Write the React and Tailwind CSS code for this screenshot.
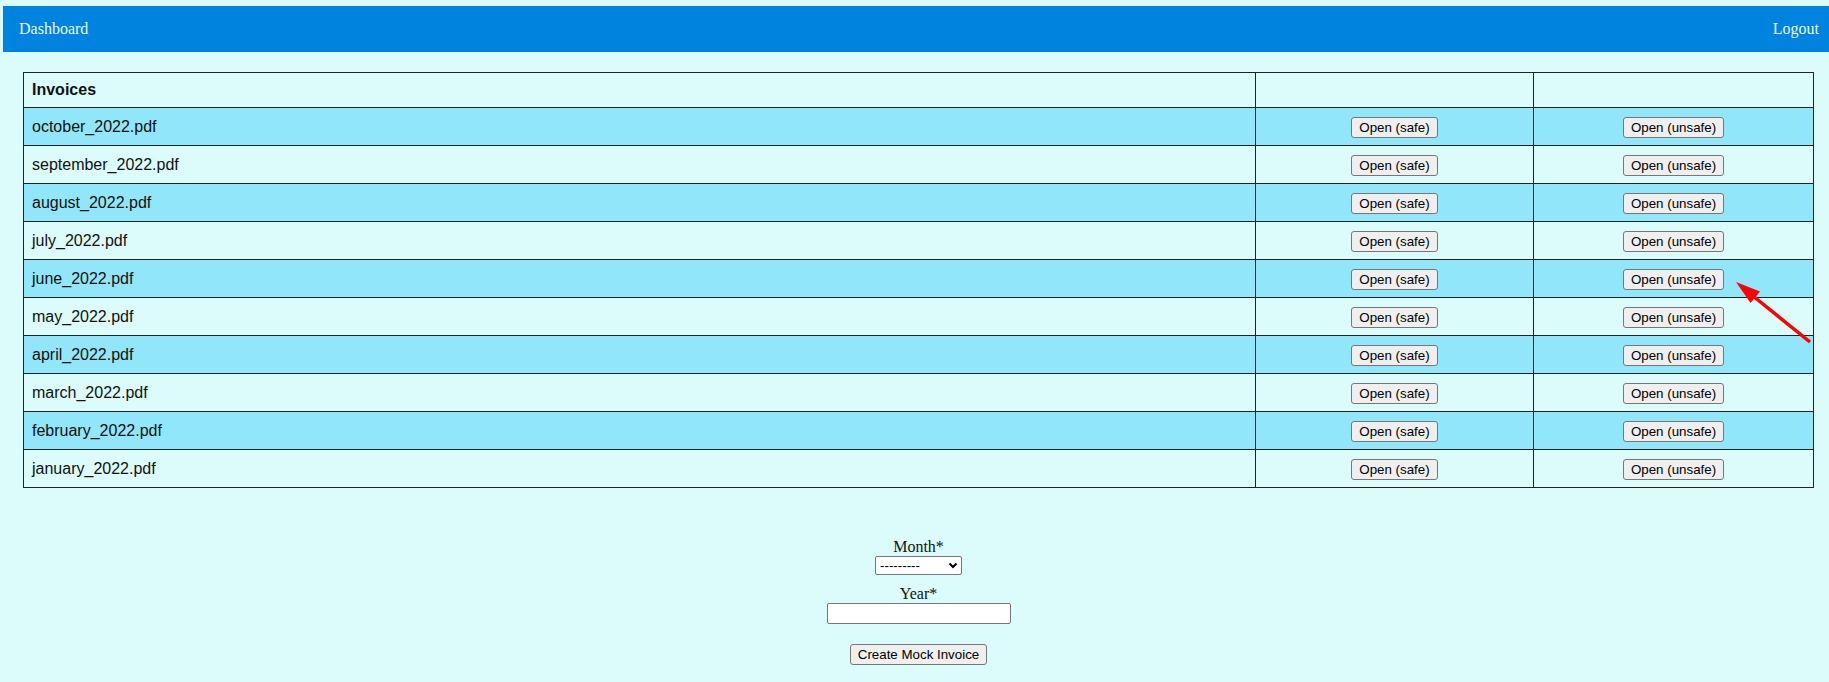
import React from 'react';

const invoices = [
  'october_2022.pdf',
  'september_2022.pdf',
  'august_2022.pdf',
  'july_2022.pdf',
  'june_2022.pdf',
  'may_2022.pdf',
  'april_2022.pdf',
  'march_2022.pdf',
  'february_2022.pdf',
  'january_2022.pdf',
];

function NativeButton({ children }) {
  return (
    <button className="bg-[#efefef] border border-[#767676] rounded-[3px] px-[7px] py-[2px] text-[13.33px] leading-[15px] text-black font-['Liberation_Sans',Arial,sans-serif]">
      {children}
    </button>
  );
}

export default function App() {
  return (
    <div className="relative min-h-screen bg-[#dcfcfc] pt-[6px] pb-4 font-['Liberation_Serif','Times_New_Roman',serif]">
      <nav className="ml-[3px] h-[46px] bg-[#0083de] flex items-center justify-between pl-4 pr-[10px] text-[16px] text-[#e6fbff]">
        <a>Dashboard</a>
        <a>Logout</a>
      </nav>

      <div className="ml-[23px] mr-[15px] mt-[20px]">
        <table className="w-full border-collapse font-['Liberation_Sans',Arial,sans-serif] text-[16px] text-[#111]">
          <thead>
            <tr className="h-[35px]">
              <th className="border border-[#222] text-left font-bold px-2">Invoices</th>
              <th className="border border-[#222] w-[278px]"></th>
              <th className="border border-[#222] w-[280px]"></th>
            </tr>
          </thead>
          <tbody>
            {invoices.map((name, i) => (
              <tr key={name} className={i % 2 === 0 ? 'h-[38px] bg-[#91e6fa]' : 'h-[38px]'}>
                <td className="border border-[#222] px-2">{name}</td>
                <td className="border border-[#222] text-center">
                  <NativeButton>Open (safe)</NativeButton>
                </td>
                <td className="border border-[#222] text-center">
                  <NativeButton>Open (unsafe)</NativeButton>
                </td>
              </tr>
            ))}
          </tbody>
        </table>

        <form className="flex flex-col items-center mt-[50px] text-[16px] leading-[18px] text-[#111]">
          <label>Month*</label>
          <div className="relative">
            <select className="appearance-none w-[87px] h-[19px] bg-white border border-[#767676] rounded-[2px] pl-[4px] text-[13.33px] leading-[15px] text-black font-['Liberation_Sans',Arial,sans-serif]">
              <option>---------</option>
            </select>
            <svg className="absolute right-[4px] top-[6px] pointer-events-none" width="10" height="7" viewBox="0 0 10 7">
              <path d="M1.5 1.5 L5 5 L8.5 1.5" fill="none" stroke="#000" strokeWidth="2" />
            </svg>
          </div>
          <label className="mt-[10px]">Year*</label>
          <input className="w-[184px] h-[21px] bg-white border border-[#767676] rounded-[2px]" type="text" />
          <button type="button" className="mt-[20px] bg-[#efefef] border border-[#767676] rounded-[3px] px-[7px] py-[2px] text-[13.33px] leading-[15px] text-black font-['Liberation_Sans',Arial,sans-serif]">
            Create Mock Invoice
          </button>
        </form>
      </div>

      <svg className="absolute left-0 top-0 pointer-events-none" width="1829" height="682">
        <line x1="1810" y1="342" x2="1748" y2="292" stroke="#ff0000" strokeWidth="3.5" />
        <polygon points="1736,282 1760,291.5 1750.5,303" fill="#ff0000" />
      </svg>
    </div>
  );
}
